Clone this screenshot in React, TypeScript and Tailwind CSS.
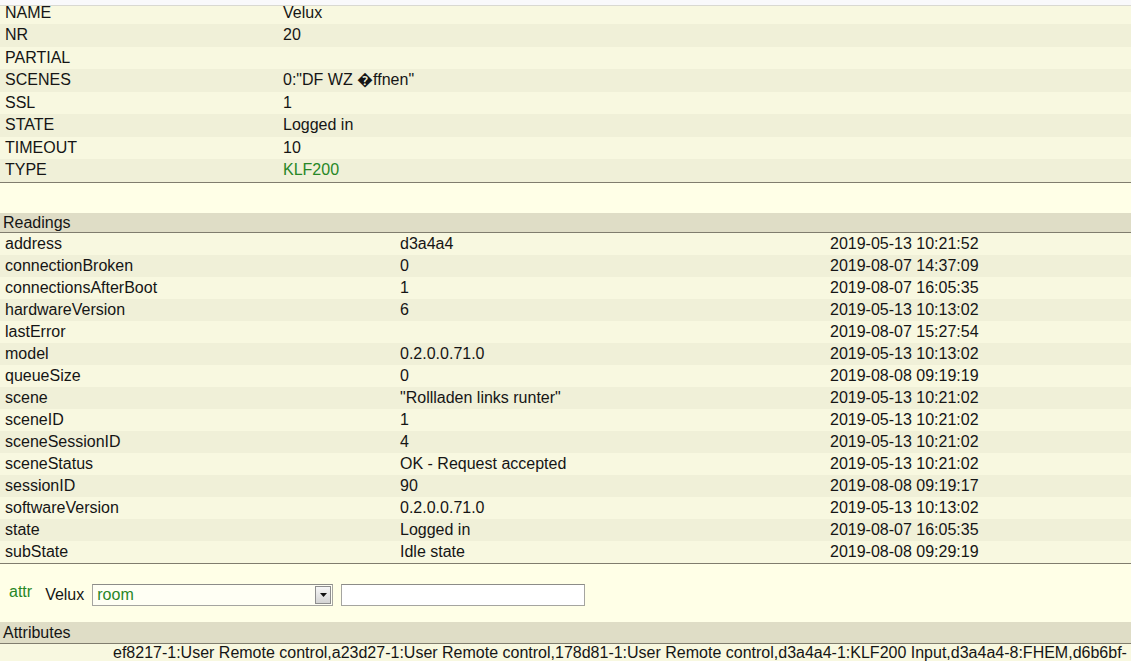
import React from 'react';

type Reading = [string, string, string];

const internals: [string, string][] = [
  ['NR', '20'],
  ['PARTIAL', ''],
  ['SCENES', '0:"DF WZ \uFFFDffnen"'],
  ['SSL', '1'],
  ['STATE', 'Logged in'],
  ['TIMEOUT', '10'],
];

const readings: Reading[] = [
  ['address', 'd3a4a4', '2019-05-13 10:21:52'],
  ['connectionBroken', '0', '2019-08-07 14:37:09'],
  ['connectionsAfterBoot', '1', '2019-08-07 16:05:35'],
  ['hardwareVersion', '6', '2019-05-13 10:13:02'],
  ['lastError', '', '2019-08-07 15:27:54'],
  ['model', '0.2.0.0.71.0', '2019-05-13 10:13:02'],
  ['queueSize', '0', '2019-08-08 09:19:19'],
  ['scene', '"Rollladen links runter"', '2019-05-13 10:21:02'],
  ['sceneID', '1', '2019-05-13 10:21:02'],
  ['sceneSessionID', '4', '2019-05-13 10:21:02'],
  ['sceneStatus', 'OK - Request accepted', '2019-05-13 10:21:02'],
  ['sessionID', '90', '2019-08-08 09:19:17'],
  ['softwareVersion', '0.2.0.0.71.0', '2019-05-13 10:13:02'],
  ['state', 'Logged in', '2019-08-07 16:05:35'],
  ['subState', 'Idle state', '2019-08-08 09:29:19'],
];

const linkValue =
  'ef8217-1:User Remote control,a23d27-1:User Remote control,178d81-1:User Remote control,d3a4a4-1:KLF200 Input,d3a4a4-8:FHEM,d6b6bf-1:User Remote control,d6b6bf-2:User Remote control';

// odd rows are the lighter ones
const rowBg = (i: number) => (i % 2 === 0 ? 'bg-[#f8f8e0]' : 'bg-[#f0f0d8]');

export default function App() {
  return (
    <div className="h-[661px] overflow-hidden bg-[#ffffe7] font-['Liberation_Sans',Arial,sans-serif] text-[16px] text-[#151515]">
      {/* strip of the element above, scrolled away */}
      <div className="h-[6px] bg-[#f9f9fb] border-b border-[#d9d9d2]" />

      {/* Internals */}
      <div className="border-b border-[#807d6e]">
        <div className={`grid grid-cols-[278px_1fr] pl-[5px] h-[18px] leading-[14.5px] ${rowBg(0)}`}>
          <div>NAME</div>
          <div>Velux</div>
        </div>
        {internals.map(([k, v], i) => (
          <div key={k} className={`grid grid-cols-[278px_1fr] pl-[5px] h-[22.5px] leading-[22.5px] ${rowBg(i + 1)}`}>
            <div>{k}</div>
            <div>{v}</div>
          </div>
        ))}
        <div className={`grid grid-cols-[278px_1fr] pl-[5px] h-[22.5px] leading-[22.5px] ${rowBg(7)}`}>
          <div>TYPE</div>
          <div className="text-[#278727]">KLF200</div>
        </div>
      </div>

      <div className="h-[30px]" />

      {/* Readings */}
      <div className="h-[19px] leading-[20px] pl-[3px] bg-[#dfddc6] border-b border-[#807d6e] box-content">Readings</div>
      <div className="border-b border-[#807d6e]">
        {readings.map(([k, v, t], i) => (
          <div key={k} className={`grid grid-cols-[395px_430px_1fr] pl-[5px] h-[22px] leading-[22px] ${rowBg(i)}`}>
            <div>{k}</div>
            <div>{v}</div>
            <div>{t}</div>
          </div>
        ))}
      </div>

      {/* attr command line */}
      <div className="h-[58px] flex items-start pt-[20px] pl-[9px]">
        <span className="text-[#278727] leading-[16px]">attr</span>
        <span className="ml-[13px] leading-[22px]">Velux</span>
        <div className="ml-[8px] w-[241px] h-[22px] flex items-center justify-between bg-[#fffff4] border border-[#a5a5a0] border-t-[#8c8c88]">
          <span className="pl-[4px] text-[#278727] leading-[20px]">room</span>
          <div className="mr-[1px] w-[16px] h-[18px] flex items-center justify-center border border-[#8e8e8e] bg-gradient-to-b from-[#f7f7f7] to-[#d4d4d4]">
            <svg width="7" height="4" viewBox="0 0 7 4">
              <path d="M0 0h7L3.5 4z" fill="#111" />
            </svg>
          </div>
        </div>
        <div className="ml-[8px] w-[244px] h-[22px] bg-white border border-[#a5a5a0] border-t-[#8c8c88]" />
      </div>

      {/* Attributes */}
      <div className="h-[21px] leading-[21px] pl-[3px] bg-[#dfddc6] border-b border-[#807d6e] box-content">Attributes</div>
      <div className={`grid grid-cols-[113px_1fr] ${rowBg(0)}`}>
        <div className="pl-[31px] pt-[14px] text-[#278727]">linkIN</div>
        <div className="leading-[18px] break-all">{linkValue}</div>
      </div>
    </div>
  );
}
